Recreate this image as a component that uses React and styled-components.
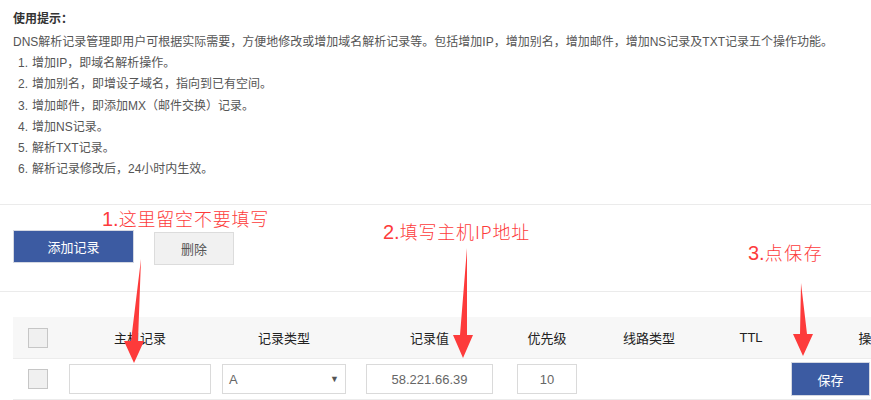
import React from "react";
import styled, { createGlobalStyle } from 'styled-components';


const GlobalStyle = createGlobalStyle`
    body {
        margin: 0;
        background: #fff;
        font-family: "Liberation Sans", "Noto Sans CJK SC", sans-serif;
        font-size: 12px;
        color: #555;
    }
`;

const Page = styled.div`
    position: relative;
    width: 871px;
    height: 400px;
    overflow: hidden;
`;

const Tips = styled.div`
    padding: 10px 13px 0;
    height: 205px;
    box-sizing: border-box;
    border-bottom: 1px solid #ebebeb;
`;

const TipTitle = styled.div`
    font-weight: bold;
    color: #333;
    line-height: 18px;
    height: 21px;
`;

const TipText = styled.p`
    margin: 1px 0 0;
    line-height: 21px;
    white-space: nowrap;
`;

const TipList = styled.ol`
    margin: 0;
    padding: 0 0 0 5px;
    list-style: none;
`;

const TipItem = styled.li`
    display: flex;
    line-height: 21.3px;

    span:first-child {
        width: 14px;
    }
`;

const Toolbar = styled.div`
    display: flex;
    align-items: flex-start;
    gap: 20px;
    height: 87px;
    padding: 25px 0 0 13px;
    box-sizing: border-box;
    border-bottom: 1px solid #ebebeb;
`;

const Button = styled.button`
    box-sizing: border-box;
    width: ${props => props.$width}px;
    height: ${props => props.$height}px;
    margin-top: ${props => props.$offset || 0}px;
    border: 1px solid ${props => props.$primary ? '#d4d8e2' : '#dcdcdc'};
    background: ${props => props.$primary ? '#3c5ba2' : '#f1f1f1'};
    color: ${props => props.$primary ? '#fff' : '#555'};
    font-family: inherit;
    font-size: 13px;
    padding: 0;
    cursor: pointer;
`;

const Table = styled.div`
    margin: 25px 0 0 13px;
    width: 940px;
`;

const Row = styled.div`
    display: grid;
    grid-template-columns: 50px 154px 134px 157px 78px 126px 78px 163px;
    align-items: center;
    justify-items: center;
    height: ${props => props.$header ? 41 : 40}px;
    background: ${props => props.$header ? '#f7f7f7' : '#fff'};
    border-bottom: 1px solid #ececec;
    color: ${props => props.$header ? '#222' : '#555'};
    font-size: ${props => props.$header ? 13 : 12}px;
`;

const Check = styled.span`
    display: block;
    width: 20px;
    height: 20px;
    box-sizing: border-box;
    border: 1px solid #c6c6c6;
    background: #f0f0f0;
`;

const Field = styled.div`
    box-sizing: border-box;
    width: ${props => props.$width}px;
    height: 30px;
    border: 1px solid #dadada;
    background: #fff;
    display: flex;
    align-items: center;
    justify-content: ${props => props.$center ? 'center' : 'space-between'};
    padding: 0 6px;
    color: #666;
    font-size: 13px;
`;

const Caret = styled.span`
    font-size: 9px;
    color: #555;
`;

const ActionCell = styled.div`
    justify-self: start;
    padding-left: 1px;
`;

const Overlay = styled.svg`
    position: absolute;
    left: 0;
    top: 0;
    pointer-events: none;
`;

const Note = styled.span`
    position: absolute;
    left: ${props => props.$x}px;
    top: ${props => props.$y}px;
    color: #fd3b3b;
    font-size: 18px;
    font-weight: 300;
    letter-spacing: ${props => props.$spacing}px;
    font-family: "Noto Sans CJK SC", sans-serif;
    line-height: 20px;
    white-space: nowrap;

    b {
        font-family: "Liberation Sans", sans-serif;
        font-size: 20px;
        letter-spacing: 0;
    }
`;


const tips = [
    '增加IP，即域名解析操作。',
    '增加别名，即增设子域名，指向到已有空间。',
    '增加邮件，即添加MX（邮件交换）记录。',
    '增加NS记录。',
    '解析TXT记录。',
    '解析记录修改后，24小时内生效。',
];

// arrows: tail top, head base y, tip
const arrows = [
    { x1: 141, y1: 259, x2: 134, yh: 341, tip: 363 },
    { x1: 467, y1: 248, x2: 463, yh: 335, tip: 358 },
    { x1: 801, y1: 283, x2: 803, yh: 334, tip: 356 },
];


export default function App() {
    return (
        <Page>
            <GlobalStyle />

            <Tips>
                <TipTitle>使用提示：</TipTitle>
                <TipText>DNS解析记录管理即用户可根据实际需要，方便地修改或增加域名解析记录等。包括增加IP，增加别名，增加邮件，增加NS记录及TXT记录五个操作功能。</TipText>
                <TipList>
                    {tips.map((t, i) =>
                        <TipItem key={'tip' + i}><span>{i + 1}.</span><span>{t}</span></TipItem>
                    )}
                </TipList>
            </Tips>

            <Toolbar>
                <Button $primary $width={121} $height={33}>添加记录</Button>
                <Button $width={80} $height={33} $offset={2}>删除</Button>
            </Toolbar>

            <Table>
                <Row $header>
                    <Check />
                    <span>主机记录</span>
                    <span>记录类型</span>
                    <span>记录值</span>
                    <span>优先级</span>
                    <span>线路类型</span>
                    <span>TTL</span>
                    <span>操作</span>
                </Row>
                <Row>
                    <Check />
                    <Field $width={142} />
                    <Field $width={124}><span>A</span><Caret>▼</Caret></Field>
                    <Field $width={127} $center>58.221.66.39</Field>
                    <Field $width={60} $center>10</Field>
                    <span />
                    <span />
                    <ActionCell>
                        <Button $primary $width={79} $height={34}>保存</Button>
                    </ActionCell>
                </Row>
            </Table>

            <Note $x={102} $y={208} $spacing={0.8}><b>1.</b>这里留空不要填写</Note>
            <Note $x={383} $y={221} $spacing={0.8}><b>2.</b>填写主机IP地址</Note>
            <Note $x={748} $y={242} $spacing={1.5}><b>3.</b>点保存</Note>

            <Overlay width="871" height="400">
                {arrows.map((a, i) =>
                    <polygon
                        key={'arrow' + i}
                        fill="#fd3b3b"
                        points={`${a.x1},${a.y1} ${a.x2 + 4},${a.yh} ${a.x2 + 10},${a.yh} ${a.x2},${a.tip} ${a.x2 - 10},${a.yh} ${a.x2 - 3},${a.yh}`}
                    />
                )}
            </Overlay>
        </Page>
    );
}
